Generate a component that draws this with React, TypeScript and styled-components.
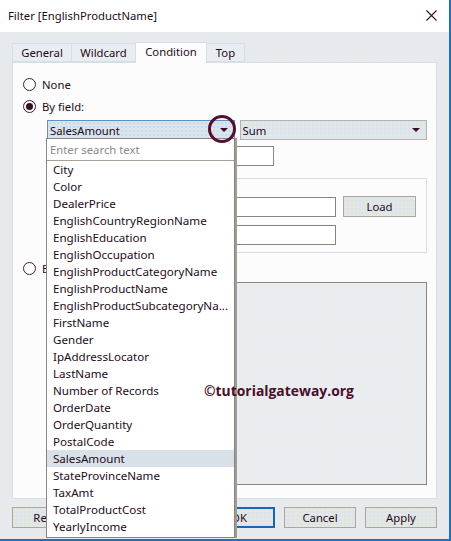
import React from "react";
import styled, { createGlobalStyle } from "styled-components";

const Global = createGlobalStyle`
  html, body { margin: 0; padding: 0; background: #ffffff; }
  body { font-family: "Noto Sans", "Liberation Sans", sans-serif; font-size: 11.3px; color: #1e0b20; }
  * { box-sizing: border-box; }
`;

const Window = styled.div`
  position: relative;
  width: 451px;
  height: 541px;
  border-right: 2px solid #1f6fc0;
  border-bottom: 2px solid #1f6fc0;
  background: #e7ebef;
  display: flex;
  flex-direction: column;
  overflow: hidden;
`;

const TitleBar = styled.div`
  height: 32px;
  background: #ffffff;
  display: flex;
  align-items: center;
  justify-content: space-between;
  padding: 0 12px 2px 8px;
  font-size: 11.3px;
`;

const Body = styled.div`
  flex: 1;
  display: flex;
  flex-direction: column;
  padding: 10px 12px 0 12px;
  background-color: #e6eaee;
  background-image: radial-gradient(#f4f0c8 0.6px, transparent 0.8px);
  background-size: 5px 5px;
`;

const TabStrip = styled.div`
  display: flex;
  align-items: flex-end;
  height: 20px;
  padding-left: 1px;
`;

const Tab = styled.div<{ $active?: boolean; $w: number }>`
  height: ${(p) => (p.$active ? "21px" : "19px")};
  margin-bottom: ${(p) => (p.$active ? "-1px" : "0")};
  display: flex;
  align-items: center;
  justify-content: center;
  background: ${(p) => (p.$active ? "#fcfcfc" : "#e9edf1")};
  border: 1px solid #d6dee6;
  border-bottom: ${(p) => (p.$active ? "none" : "1px solid #d6dee6")};
  margin-left: -1px;
  position: relative;
  z-index: ${(p) => (p.$active ? 2 : 1)};
  width: ${(p) => p.$w}px;
  padding-bottom: ${(p) => (p.$active ? "3px" : "0")};
`;

const Panel = styled.div`
  height: 437px;
  background: #fcfcfc;
  border: 1px solid #d6dee6;
  padding: 13px 0 0 10px;
  display: flex;
  flex-direction: column;
`;

const RadioRow = styled.label<{ $mt?: number }>`
  display: flex;
  align-items: center;
  gap: 6px;
  height: 16px;
  margin-top: ${(p) => p.$mt ?? 0}px;
`;

const RadioCircle = styled.span<{ $checked?: boolean }>`
  width: 13px;
  height: 13px;
  border-radius: 50%;
  border: 1px solid #3a2030;
  background: #ffffff;
  display: flex;
  align-items: center;
  justify-content: center;
  &::after {
    content: "";
    display: ${(p) => (p.$checked ? "block" : "none")};
    width: 7px;
    height: 7px;
    border-radius: 50%;
    background: #3a0c26;
  }
`;

const Indented = styled.div`
  margin-left: 24px;
  width: 380px;
  display: flex;
  flex-direction: column;
`;

const ComboRow = styled.div`
  display: flex;
  gap: 5px;
  margin-top: 6px;
`;

const Combo = styled.div<{ $w: number; $focus?: boolean }>`
  width: ${(p) => p.$w}px;
  height: 20px;
  border: 1px solid ${(p) => (p.$focus ? "#5f8fc4" : "#b8b3a8")};
  background-color: #dce5ee;
  background-image: radial-gradient(${(p) => (p.$focus ? "#a8d0f0" : "#f2eec4")} 0.6px, transparent 0.8px);
  background-size: 4px 4px;
  display: flex;
  align-items: center;
  justify-content: space-between;
  padding: 0 6px 0 2px;
`;

const Arrow = styled.span`
  width: 0;
  height: 0;
  border-left: 4px solid transparent;
  border-right: 4px solid transparent;
  border-top: 4px solid #3a0c26;
`;

const SmallBox = styled.div<{ $w: number; $ml: number; $mt: number }>`
  width: ${(p) => p.$w}px;
  height: 20px;
  margin-left: ${(p) => p.$ml}px;
  margin-top: ${(p) => p.$mt}px;
  border: 1px solid #8a8480;
  background: #ffffff;
`;

const GroupBox = styled.div`
  margin-top: 12px;
  width: 380px;
  height: 75px;
  border: 1px solid #d6dee6;
  display: flex;
  flex-direction: column;
  padding: 17px 0 0 0;
`;

const GroupRow = styled.div<{ $mt?: number }>`
  display: flex;
  align-items: center;
  gap: 7px;
  margin-top: ${(p) => p.$mt ?? 0}px;
`;

const Button = styled.div<{ $w: number; $default?: boolean }>`
  width: ${(p) => p.$w}px;
  height: 21px;
  border: ${(p) => (p.$default ? "2px solid #1c64b8" : "1px solid #aba79c")};
  background-color: #dde4ea;
  background-image: radial-gradient(#f4efbe 0.6px, transparent 0.8px);
  background-size: 4px 4px;
  display: flex;
  align-items: center;
  justify-content: center;
`;

const FormulaBox = styled.div`
  margin-top: 6px;
  width: 380px;
  height: 203px;
  border: 1px solid #8a8480;
  background-color: #e9edf1;
  background-image: radial-gradient(#f4efbe 0.6px, transparent 0.8px);
  background-size: 5px 5px;
`;

const ButtonRow = styled.div`
  display: flex;
  margin-top: 8px;
  justify-content: space-between;
`;

const ButtonGroup = styled.div`
  display: flex;
  gap: 9px;
`;

const DropList = styled.div`
  position: absolute;
  left: 46px;
  top: 138px;
  width: 189px;
  height: 400px;
  background: #ffffff;
  border: 1px solid #8a8480;
  box-shadow: 2px 0 0 #a09c98;
  display: flex;
  flex-direction: column;
  z-index: 10;
`;

const Search = styled.div`
  height: 22px;
  flex: none;
  border-bottom: 1px solid #a8a098;
  color: #8a8a8a;
  display: flex;
  align-items: center;
  padding-left: 3px;
`;

const Item = styled.div<{ $sel?: boolean }>`
  height: 17px;
  flex: none;
  line-height: 17px;
  padding-left: 6px;
  background: ${(p) => (p.$sel ? "#d9e1e8" : "transparent")};
  white-space: nowrap;
  font-size: 11.6px;
`;

const Ring = styled.div`
  position: absolute;
  left: 208px;
  top: 115px;
  width: 28px;
  height: 28px;
  border-radius: 50%;
  border: 3px solid #55102f;
  z-index: 11;
`;

const Watermark = styled.div`
  position: absolute;
  left: 204px;
  top: 381px;
  font-family: "Open Sans", "Noto Sans", sans-serif;
  font-weight: 700;
  font-size: 13.9px;
  color: #4a0e2a;
  z-index: 12;
`;

const CloseX = styled.svg`
  display: block;
`;

const items = [
  "City",
  "Color",
  "DealerPrice",
  "EnglishCountryRegionName",
  "EnglishEducation",
  "EnglishOccupation",
  "EnglishProductCategoryName",
  "EnglishProductName",
  "EnglishProductSubcategoryNa...",
  "FirstName",
  "Gender",
  "IpAddressLocator",
  "LastName",
  "Number of Records",
  "OrderDate",
  "OrderQuantity",
  "PostalCode",
  "SalesAmount",
  "StateProvinceName",
  "TaxAmt",
  "TotalProductCost",
  "YearlyIncome",
];

export default function App() {
  return (
    <>
      <Global />
      <Window>
        <TitleBar>
          <span>Filter [EnglishProductName]</span>
          <CloseX width="11" height="11" viewBox="0 0 11 11">
            <path d="M0.5 0.5 L10.5 10.5 M10.5 0.5 L0.5 10.5" stroke="#3a0c26" strokeWidth="1.1" />
          </CloseX>
        </TitleBar>
        <Body>
          <TabStrip>
            <Tab $w={60}>General</Tab>
            <Tab $w={65}>Wildcard</Tab>
            <Tab $w={72} $active>Condition</Tab>
            <Tab $w={39}>Top</Tab>
          </TabStrip>
          <Panel>
            <RadioRow>
              <RadioCircle />
              None
            </RadioRow>
            <RadioRow $mt={6}>
              <RadioCircle $checked />
              By field:
            </RadioRow>
            <Indented>
              <ComboRow>
                <Combo $w={188} $focus>
                  <span>SalesAmount</span>
                  <Arrow />
                </Combo>
                <Combo $w={188}>
                  <span>Sum</span>
                  <Arrow />
                </Combo>
              </ComboRow>
              <SmallBox $w={70} $ml={157} $mt={6} />
              <GroupBox>
                <GroupRow>
                  <SmallBox $w={131} $ml={157} $mt={0} />
                  <Button $w={73}>Load</Button>
                </GroupRow>
                <GroupRow $mt={8}>
                  <SmallBox $w={131} $ml={157} $mt={0} />
                </GroupRow>
              </GroupBox>
            </Indented>
            <RadioRow $mt={7}>
              <RadioCircle />
              By formula:
            </RadioRow>
            <Indented>
              <FormulaBox />
            </Indented>
          </Panel>
          <ButtonRow>
            <Button $w={72}>Reset</Button>
            <ButtonGroup>
              <Button $w={72} $default>OK</Button>
              <Button $w={72}>Cancel</Button>
              <Button $w={72}>Apply</Button>
            </ButtonGroup>
          </ButtonRow>
        </Body>
        <DropList>
          <Search>Enter search text</Search>
          {items.map((it) => (
            <Item key={it} $sel={it === "SalesAmount"}>
              {it}
            </Item>
          ))}
        </DropList>
        <Ring />
        <Watermark>©tutorialgateway.org</Watermark>
      </Window>
    </>
  );
}
